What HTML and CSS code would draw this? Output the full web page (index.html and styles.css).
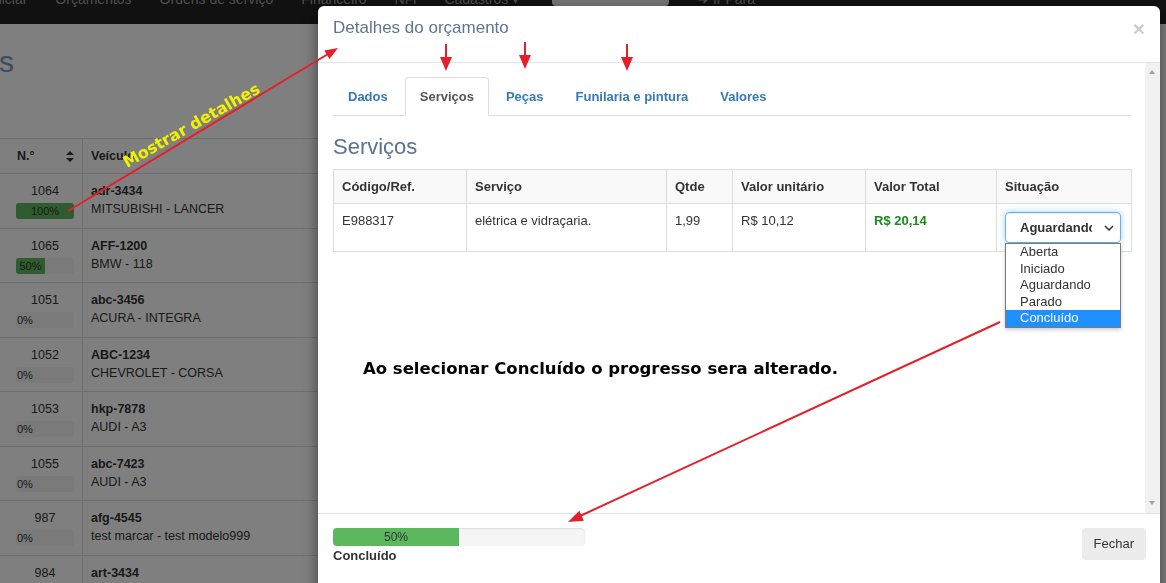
FILE: index.html
```html
<!DOCTYPE html>
<html lang="pt-BR">
<head>
<meta charset="UTF-8" />
<meta name="viewport" content="width=device-width, initial-scale=1" />
<title>Orçamentos</title>
<link rel="stylesheet" href="styles.css">
</head>
<body>

<div class="page">
  <nav class="navbar">
    <ul class="nav-links">
      <li>Iniciar</li>
      <li>Orçamentos</li>
      <li>Ordens de serviço</li>
      <li>Financeiro</li>
      <li>NFi</li>
      <li>Cadastros ▾</li>
      <li class="nav-search"></li>
      <li>➜ Ir Para</li>
    </ul>
  </nav>

  <h1 class="page-title">Orçamentos</h1>

  <table class="orders">
    <thead>
      <tr>
        <th class="num-col">
          <div class="sortable">N.°
            <svg width="8" height="11" viewBox="0 0 8 11"><path d="M4 0L8 4H0z M4 11L0 7h8z" fill="#333"/></svg>
          </div>
        </th>
        <th>Veículo</th>
      </tr>
    </thead>
    <tbody>
      <tr>
        <td class="num-col">1064<div class="bar"><div class="bar-fill" style="width:100%">100%</div></div></td>
        <td><b>adr-3434</b><br>MITSUBISHI - LANCER</td>
      </tr>
      <tr>
        <td class="num-col">1065<div class="bar"><div class="bar-fill" style="width:50%">50%</div></div></td>
        <td><b>AFF-1200</b><br>BMW - 118</td>
      </tr>
      <tr>
        <td class="num-col">1051<div class="bar"><span class="bar-label">0%</span></div></td>
        <td><b>abc-3456</b><br>ACURA - INTEGRA</td>
      </tr>
      <tr>
        <td class="num-col">1052<div class="bar"><span class="bar-label">0%</span></div></td>
        <td><b>ABC-1234</b><br>CHEVROLET - CORSA</td>
      </tr>
      <tr>
        <td class="num-col">1053<div class="bar"><span class="bar-label">0%</span></div></td>
        <td><b>hkp-7878</b><br>AUDI - A3</td>
      </tr>
      <tr>
        <td class="num-col">1055<div class="bar"><span class="bar-label">0%</span></div></td>
        <td><b>abc-7423</b><br>AUDI - A3</td>
      </tr>
      <tr>
        <td class="num-col">987<div class="bar"><span class="bar-label">0%</span></div></td>
        <td><b>afg-4545</b><br>test marcar - test modelo999</td>
      </tr>
      <tr>
        <td class="num-col">984<div class="bar"><span class="bar-label">0%</span></div></td>
        <td><b>art-3434</b><br>FIAT - UNO</td>
      </tr>
    </tbody>
  </table>
</div>

<div class="backdrop"></div>

<div class="modal">
  <div class="modal-header">
    <h4 class="modal-title">Detalhes do orçamento</h4>
    <button type="button" class="close">×</button>
  </div>

  <div class="modal-main">
    <div class="modal-body">
      <ul class="tabs">
        <li><a href="#">Dados</a></li>
        <li><a href="#" class="active">Serviços</a></li>
        <li><a href="#">Peças</a></li>
        <li><a href="#">Funilaria e pintura</a></li>
        <li><a href="#">Valores</a></li>
      </ul>

      <h3 class="section-title">Serviços</h3>

      <table class="services">
        <thead>
          <tr>
            <th class="c-code">Código/Ref.</th>
            <th class="c-desc">Serviço</th>
            <th class="c-qty">Qtde</th>
            <th class="c-unit">Valor unitário</th>
            <th class="c-total">Valor Total</th>
            <th class="c-status">Situação</th>
          </tr>
        </thead>
        <tbody>
          <tr>
            <td>E988317</td>
            <td>elétrica e vidraçaria.</td>
            <td>1,99</td>
            <td>R$ 10,12</td>
            <td class="total">R$ 20,14</td>
            <td>
              <div class="select-wrap">
                <div class="select">
                  <span class="select-value">Aguardando</span>
                  <svg class="chevron" width="10" height="6" viewBox="0 0 10 6"><path d="M1 1l4 4 4-4" fill="none" stroke="#333" stroke-width="1.5"/></svg>
                </div>
                <ul class="options">
                  <li>Aberta</li>
                  <li>Iniciado</li>
                  <li>Aguardando</li>
                  <li>Parado</li>
                  <li class="selected">Concluído</li>
                </ul>
              </div>
            </td>
          </tr>
        </tbody>
      </table>
    </div>
    <div class="scrollbar">
      <span class="arrow up"></span>
      <span class="arrow down"></span>
    </div>
  </div>

  <div class="modal-footer">
    <div class="footer-status">
      <div class="progress"><div class="progress-bar" style="width:50%">50%</div></div>
      <div class="status">Concluído</div>
    </div>
    <button type="button" class="btn">Fechar</button>
  </div>
</div>

<!-- notes drawn over the screenshot -->
<svg class="annotations" width="1166" height="583" viewBox="0 0 1166 583">
  <g stroke="#e3202a" stroke-width="2" fill="none">
    <line x1="68" y1="211" x2="328" y2="54" />
    <line x1="446" y1="44" x2="446" y2="60" />
    <line x1="525" y1="42" x2="525" y2="58" />
    <line x1="627" y1="44" x2="627" y2="60" />
    <line x1="1000" y1="322" x2="580" y2="516" />
  </g>
  <g fill="#e3202a">
    <polygon points="338,48 329.5,59 324.3,50.4" />
    <polygon points="440,57 452,57 446,71" />
    <polygon points="519,55 531,55 525,69" />
    <polygon points="621,57 633,57 627,71" />
    <polygon points="568,522 583.9,520.7 579.3,510.7" />
  </g>
  <text class="note-yellow" x="127" y="168" transform="rotate(-29.5 127 168)">Mostrar detalhes</text>
  <text class="note-black" x="363" y="374">Ao selecionar Concluído o progresso sera alterado.</text>
</svg>

</body>
</html>
```

FILE: styles.css
```css
body {
  margin: 0;
  width: 1166px;
  height: 583px;
  overflow: hidden;
  font-family: "Liberation Sans", Arial, sans-serif;
  font-size: 13px;
  line-height: 1.42857;
  color: #333;
  background: #fff;
}

/* page behind the modal */
.navbar {
  height: 24px;
  background: #222;
  overflow: hidden;
}
.nav-links {
  display: flex;
  gap: 28px;
  list-style: none;
  margin: -11px 0 0 -10px;
  padding: 0;
  font-size: 14px;
  line-height: 20px;
  color: #9d9d9d;
}
.nav-search {
  width: 117px;
  height: 17px;
  margin-left: 5px;
  background: #eee;
  border-radius: 4px;
}
.page-title {
  width: 200px;
  margin: 21px 0 0 -186px;
  text-align: right;
  font-size: 30px;
  line-height: 33px;
  font-weight: normal;
  color: #7a99bf;
}
.orders {
  margin-top: 60px;
  width: 1120px;
  border-collapse: collapse;
  font-size: 12.5px;
  line-height: 18px;
}
.orders th,
.orders td {
  border-top: 1px solid #ddd;
  border-bottom: 1px solid #ddd;
  padding: 8px;
  text-align: left;
  vertical-align: top;
}
.orders td {
  padding-bottom: 8.5px;
}
.orders th + th,
.orders td + td {
  border-left: 1px solid #ddd;
}
.orders .num-col {
  width: 58px;
  padding-left: 16px;
  text-align: center;
}
.sortable {
  display: flex;
  justify-content: space-between;
  align-items: center;
  padding-left: 1px;
}
.bar {
  height: 16px;
  margin-top: 3px;
  background: #f5f5f5;
  border-radius: 3px;
  font-size: 11px;
  line-height: 16px;
  text-align: left;
  overflow: hidden;
}
.bar-fill {
  height: 100%;
  background: #5cb85c;
  text-align: center;
}
.bar-label {
  padding-left: 1px;
}

.backdrop {
  position: fixed;
  inset: 0;
  background: rgba(0, 0, 0, 0.5);
}

/* modal */
.modal {
  position: fixed;
  left: 318px;
  top: 6px;
  width: 842px;
  height: 620px;
  background: #fff;
  border-radius: 6px;
  box-shadow: 0 5px 15px rgba(0, 0, 0, 0.5);
  display: flex;
  flex-direction: column;
}
.modal-header {
  display: flex;
  justify-content: space-between;
  align-items: flex-start;
  padding: 10px 15px 22px;
  border-bottom: 1px solid #e5e5e5;
}
.modal-title {
  margin: 0;
  font-size: 17px;
  line-height: 24px;
  font-weight: normal;
  color: #5f7590;
}
.close {
  margin-top: 2px;
  padding: 0;
  border: 0;
  background: none;
  font-family: inherit;
  font-size: 21px;
  font-weight: bold;
  line-height: 1;
  color: #000;
  opacity: 0.2;
}
.modal-main {
  display: flex;
  height: 450px;
}
.modal-body {
  flex: 1;
  min-width: 0;
  padding: 14px 14px 15px 15px;
}
.scrollbar {
  position: relative;
  flex: 0 0 15px;
  background: #f1f1f1;
}
.arrow {
  position: absolute;
  left: 4px;
  border-left: 3.5px solid transparent;
  border-right: 3.5px solid transparent;
}
.arrow.up {
  top: 7px;
  border-bottom: 4px solid #a3a3a3;
}
.arrow.down {
  bottom: 8px;
  border-top: 4px solid #a3a3a3;
}

.tabs {
  display: flex;
  list-style: none;
  margin: 0;
  padding: 0;
  border-bottom: 1px solid #ddd;
}
.tabs a {
  display: block;
  margin: 0 2px -1px 0;
  padding: 10px 14px;
  border: 1px solid transparent;
  border-radius: 4px 4px 0 0;
  font-weight: bold;
  line-height: 17px;
  color: #337ab7;
  text-decoration: none;
}
.tabs a.active {
  color: #555;
  background: #fff;
  border-color: #ddd #ddd transparent;
}
.section-title {
  margin: 19px 0 10px;
  font-size: 22px;
  line-height: 24px;
  font-weight: normal;
  color: #5a7392;
}

.services {
  width: 798px;
  table-layout: fixed;
  border-collapse: collapse;
  border: 1px solid #ddd;
}
.services th,
.services td {
  box-sizing: border-box;
  border: 1px solid #ddd;
  padding: 8px;
  line-height: 17px;
  text-align: left;
  vertical-align: top;
}
.services th {
  background: #f9f9f9;
}
.c-code { width: 133px; }
.c-desc { width: 200px; }
.c-qty { width: 66px; }
.c-unit { width: 133px; }
.c-total { width: 131px; }
.c-status { width: 135px; }
.total {
  font-weight: bold;
  color: #1a8a1a;
}

.select-wrap {
  position: relative;
  width: 116px;
}
.select {
  box-sizing: border-box;
  height: 31px;
  display: flex;
  align-items: center;
  padding: 0 6px 0 14px;
  border: 1px solid #66afe9;
  border-radius: 4px;
  box-shadow: inset 0 1px 1px rgba(0, 0, 0, 0.075), 0 0 6px rgba(102, 175, 233, 0.6);
}
.select-value {
  width: 72px;
  overflow: hidden;
  white-space: nowrap;
  font-weight: bold;
}
.chevron {
  margin-left: auto;
}
.options {
  position: absolute;
  top: 31px;
  left: 0;
  z-index: 2;
  box-sizing: border-box;
  width: 116px;
  margin: 0;
  padding: 0;
  list-style: none;
  background: #fff;
  border: 1px solid #7a7a7a;
  box-shadow: 0 2px 4px rgba(0, 0, 0, 0.2);
}
.options li {
  padding-left: 14px;
  line-height: 16.6px;
}
.options .selected {
  background: #1e90ff;
  color: #fff;
}

.modal-footer {
  display: flex;
  justify-content: space-between;
  align-items: flex-start;
  padding: 14px 14px 15px 15px;
  border-top: 1px solid #e5e5e5;
}
.progress {
  width: 252px;
  height: 18px;
  background: #f5f5f5;
  border-radius: 4px;
  box-shadow: inset 0 1px 2px rgba(0, 0, 0, 0.1);
  overflow: hidden;
}
.progress-bar {
  height: 100%;
  background: #5cb85c;
  font-size: 12px;
  line-height: 18px;
  text-align: center;
  color: #333;
}
.status {
  margin-top: 1px;
  font-weight: bold;
  line-height: 18px;
}
.btn {
  padding: 7px 12px;
  border: 0;
  border-radius: 4px;
  background: #ececec;
  font-family: inherit;
  font-size: 13px;
  line-height: 18px;
  color: #333;
}

.annotations {
  position: fixed;
  top: 0;
  left: 0;
  pointer-events: none;
}
.note-yellow {
  font-family: "DejaVu Sans", Verdana, sans-serif;
  font-weight: bold;
  font-size: 16px;
  fill: #f2f200;
}
.note-black {
  font-family: "DejaVu Sans", Verdana, sans-serif;
  font-weight: bold;
  font-size: 16.5px;
  fill: #000;
}
```
